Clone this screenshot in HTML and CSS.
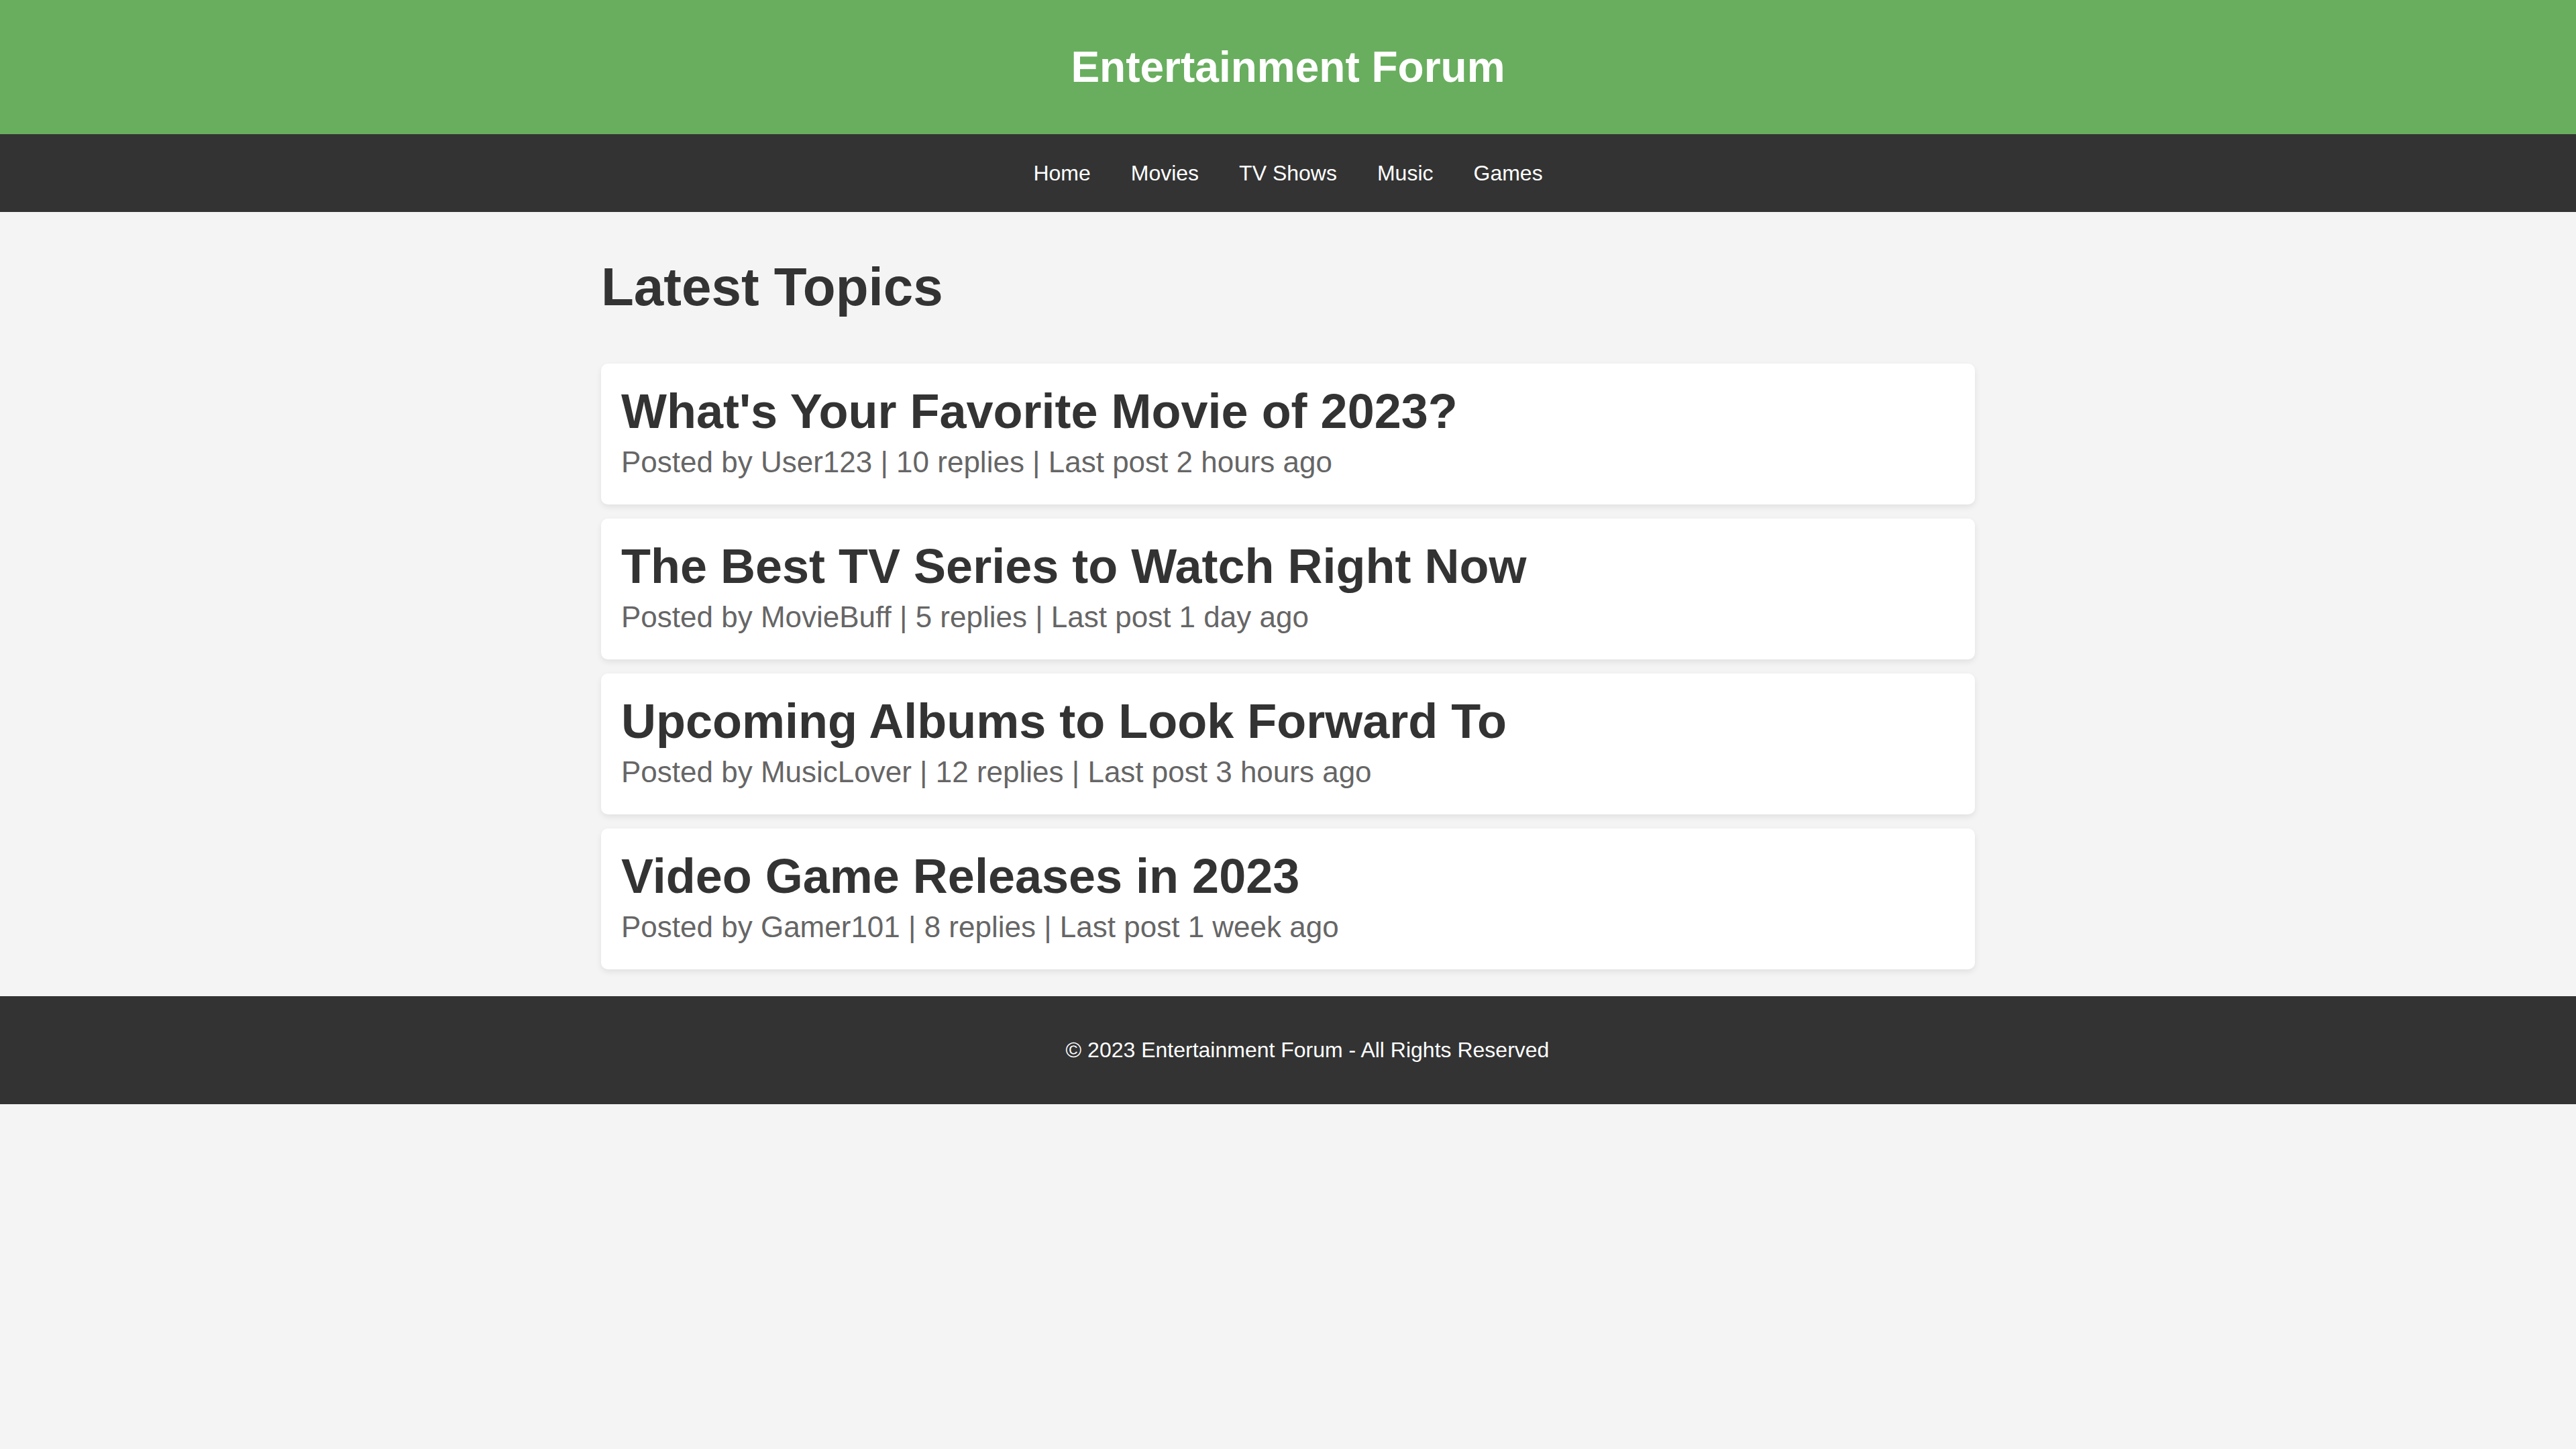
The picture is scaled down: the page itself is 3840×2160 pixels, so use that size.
FILE: index.html
```html
<!DOCTYPE html>
<html lang="en">
<head>
<meta charset="utf-8">
<title>Entertainment Forum</title>
<link rel="stylesheet" href="styles.css">
</head>
<body>
<header class="site-header">
  <h1 class="site-title">Entertainment Forum</h1>
</header>
<nav class="site-nav">
  <a href="#" class="nav-link">Home</a>
  <a href="#" class="nav-link">Movies</a>
  <a href="#" class="nav-link">TV Shows</a>
  <a href="#" class="nav-link">Music</a>
  <a href="#" class="nav-link">Games</a>
</nav>
<main class="container">
  <h2 class="section-title">Latest Topics</h2>
  <div class="topic-list">
    <article class="topic">
      <h3 class="topic-title">What's Your Favorite Movie of 2023?</h3>
      <p class="topic-meta">Posted by User123 | 10 replies | Last post 2 hours ago</p>
    </article>
    <article class="topic">
      <h3 class="topic-title">The Best TV Series to Watch Right Now</h3>
      <p class="topic-meta">Posted by MovieBuff | 5 replies | Last post 1 day ago</p>
    </article>
    <article class="topic">
      <h3 class="topic-title">Upcoming Albums to Look Forward To</h3>
      <p class="topic-meta">Posted by MusicLover | 12 replies | Last post 3 hours ago</p>
    </article>
    <article class="topic">
      <h3 class="topic-title">Video Game Releases in 2023</h3>
      <p class="topic-meta">Posted by Gamer101 | 8 replies | Last post 1 week ago</p>
    </article>
  </div>
</main>
<footer class="site-footer">
  <p class="footer-text">&copy; 2023 Entertainment Forum - All Rights Reserved</p>
</footer>
</body>
</html>
```
FILE: styles.css
```css
html, body {
  margin: 0;
  padding: 0;
}
body {
  background: #f4f4f4;
  font-family: "Liberation Sans", Arial, sans-serif;
  color: #333;
}
.site-header {
  background: #68ae5e;
  height: 200px;
  display: flex;
  align-items: center;
  justify-content: center;
}
.site-title {
  margin: 0;
  color: #fff;
  font-size: 64px;
  font-weight: bold;
}
.site-nav {
  background: #333;
  height: 116px;
  display: flex;
  align-items: center;
  justify-content: center;
  gap: 60px;
}
.nav-link {
  color: #fff;
  text-decoration: none;
  font-size: 32px;
}
.container {
  width: 2048px;
  margin: 0 auto;
  padding-top: 66px;
}
.section-title {
  margin: 0 0 68px;
  font-size: 80px;
  font-weight: bold;
  color: #333;
}
.topic-list {
  display: flex;
  flex-direction: column;
  gap: 21px;
}
.topic {
  background: #fff;
  border-radius: 10px;
  padding: 30px 30px 38px;
  box-shadow: 0 4px 10px rgba(0, 0, 0, 0.08);
}
.topic-title {
  margin: 0 0 10px;
  font-size: 72px;
  font-weight: bold;
  color: #333;
}
.topic-meta {
  margin: 0;
  font-size: 44px;
  color: #666;
}
.site-footer {
  margin-top: 40px;
  background: #333;
  height: 161px;
  display: flex;
  align-items: center;
  justify-content: center;
  padding-left: 58px;
}
.footer-text {
  margin: 0;
  color: #fff;
  font-size: 32px;
}
```
